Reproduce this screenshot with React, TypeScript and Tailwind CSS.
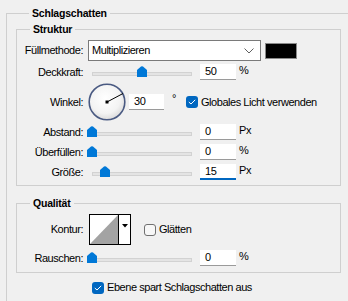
import React from "react";

const Thumb = () => (
  <svg width="10" height="11" viewBox="0 0 10 11" className="block">
    <path d="M0 4 L4 0.5 Q5 -0.2 6 0.5 L10 4 L10 11 L0 11 Z" fill="#0078d7" />
  </svg>
);

function Slider({ pos }: { pos: number }) {
  return (
    <div className="relative ml-[4px] w-[110px] h-[16px] shrink-0">
      <div className="mt-[8px] mx-[5px] h-[4px] bg-[#e4e4e4] border border-[#d2d2d2]" />
      <div className="absolute top-[2px]" style={{ left: pos }}>
        <Thumb />
      </div>
    </div>
  );
}

function Field({ value, focused, w = 36 }: { value: string; focused?: boolean; w?: number }) {
  return (
    <div
      className={
        "h-[16px] bg-white pl-[5px] leading-[15px] shrink-0 " +
        (focused ? "border-b-2 border-[#0067c0]" : "border-b border-[#9a9a9a]")
      }
      style={{ width: w }}
    >
      {value}
    </div>
  );
}

function Check({ checked }: { checked?: boolean }) {
  if (checked)
    return (
      <div className="w-[12px] h-[12px] rounded-[3px] bg-[#0067c0] flex items-center justify-center shrink-0">
        <svg width="8" height="6" viewBox="0 0 8 6">
          <path d="M0.8 3 L3 5 L7.2 0.8" stroke="white" strokeWidth="1" fill="none" />
        </svg>
      </div>
    );
  return <div className="w-[12px] h-[12px] rounded-[3px] border border-[#707070] bg-[#f7f7f7] shrink-0" />;
}

function Label({ children }: { children: React.ReactNode }) {
  return <div className="w-[66px] text-right shrink-0 whitespace-nowrap">{children}</div>;
}

function Title({ children }: { children: React.ReactNode }) {
  return (
    <div className="-mt-[9px] ml-[13px] px-[3px] w-fit bg-[#f0f0f0] font-bold leading-[16px] text-[10.5px] tracking-[-0.2px]">
      {children}
    </div>
  );
}

function SliderRow({ label, pos, value, unit, focused }: { label: string; pos: number; value: string; unit: string; focused?: boolean }) {
  return (
    <div className="flex items-center h-[16px]">
      <Label>{label}</Label>
      <Slider pos={pos} />
      <div className="ml-[3px]">
        <Field value={value} focused={focused} />
      </div>
      <div className="ml-[3px] -mt-[3px]">{unit}</div>
    </div>
  );
}

function Dial() {
  return (
    <svg width="38" height="38" viewBox="0 0 38 38" className="block shrink-0">
      <defs>
        <radialGradient id="dg" cx="45%" cy="40%" r="60%">
          <stop offset="0%" stopColor="#ffffff" />
          <stop offset="70%" stopColor="#f3f3f3" />
          <stop offset="100%" stopColor="#dcdcdc" />
        </radialGradient>
      </defs>
      <circle cx="19" cy="19" r="17.8" fill="url(#dg)" stroke="#4a5a82" strokeWidth="1.6" />
      <line x1="19" y1="19" x2="35" y2="10.5" stroke="#000" strokeWidth="1" />
      <rect x="17.5" y="17.5" width="3" height="3" fill="#000" />
    </svg>
  );
}

export default function App() {
  return (
    <div className="w-[348px] h-[301px] overflow-hidden bg-[#f0f0f0] pl-[6px] pt-[13px] text-[11px] tracking-[-0.45px] text-black font-['Liberation_Sans',Arial,sans-serif]">
      <div className="border-l border-t border-[#cfcfcf] pl-[9px] h-[320px]">
        <Title>Schlagschatten</Title>

        <div className="mt-[8px] w-[325px] border border-[#cfcfcf] pb-[5px]">
          <Title>Struktur</Title>

          <div className="flex items-center h-[21px] mt-[3px]">
            <Label>Füllmethode:</Label>
            <div className="ml-[5px] w-[173px] h-[21px] bg-white border border-[#7a7a7a] flex items-center pl-[3px] pr-[6px] shrink-0">
              <span className="flex-1">Multiplizieren</span>
              <svg width="10" height="6" viewBox="0 0 10 6">
                <path d="M0.5 0.5 L5 5 L9.5 0.5" stroke="#606060" strokeWidth="1" fill="none" />
              </svg>
            </div>
            <div className="ml-[4px] w-[32px] h-[16px] bg-black border border-[#8a8a8a]" />
          </div>

          <div className="mt-[3px]">
            <SliderRow label="Deckkraft:" pos={50} value="50" unit="%" />
          </div>

          <div className="flex items-center h-[38px] mt-[3px]">
            <Label>Winkel:</Label>
            <div className="ml-[5px]">
              <Dial />
            </div>
            <div className="ml-[3px]">
              <Field value="30" w={35} />
            </div>
            <div className="ml-[8px] -mt-[8px]">°</div>
            <div className="ml-[10px] flex items-center">
              <Check checked />
              <span className="ml-[3px]">Globales Licht verwenden</span>
            </div>
          </div>

          <div className="mt-[3px] flex flex-col gap-[4px]">
            <SliderRow label="Abstand:" pos={0} value="0" unit="Px" />
            <SliderRow label="Überfüllen:" pos={0} value="0" unit="%" />
            <SliderRow label="Größe:" pos={13} value="15" unit="Px" focused />
          </div>
        </div>

        <div className="mt-[17px] w-[325px] border border-[#cfcfcf] pb-[6px]">
          <Title>Qualität</Title>

          <div className="flex items-center h-[31px] mt-[3px]">
            <Label>Kontur:</Label>
            <div className="ml-[6px] w-[42px] h-[31px] border border-black bg-white flex shrink-0">
              <svg width="28" height="29" viewBox="0 0 28 29" className="block">
                <polygon points="0,29 28,0 28,29" fill="#a3a3a3" />
              </svg>
              <div className="flex-1 border-l border-black flex justify-center pt-[9px]">
                <svg width="6" height="4" viewBox="0 0 6 4">
                  <polygon points="0,0 6,0 3,3.5" fill="#000" />
                </svg>
              </div>
            </div>
            <div className="ml-[13px] flex items-center">
              <Check />
              <span className="ml-[3px]">Glätten</span>
            </div>
          </div>

          <div className="mt-[5px]">
            <SliderRow label="Rauschen:" pos={0} value="0" unit="%" />
          </div>
        </div>

        <div className="mt-[8px] ml-[76px] flex items-center h-[13px]">
          <Check checked />
          <span className="ml-[3px]">Ebene spart Schlagschatten aus</span>
        </div>
      </div>
    </div>
  );
}
